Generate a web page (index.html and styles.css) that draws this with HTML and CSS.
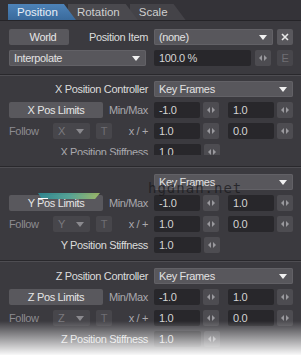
FILE: index.html
```html
<!DOCTYPE html>
<html lang="en">
  <head>
    <meta charset="UTF-8" />
    <title>Motion Options</title>
    <link rel="stylesheet" href="styles.css">
  </head>
  <body>
    <div class="tabs">
      <div class="tab active">Position</div>
      <div class="tab second">Rotation</div>
      <div class="tab third">Scale</div>
    </div>

    <div class="top">
      <div class="row">
        <div class="col">
          <div class="btn world">World</div>
          <span class="label">Position Item</span>
        </div>
        <div class="col">
          <div class="select">(none)</div>
          <div class="sq close">
            <svg width="8" height="8" viewBox="0 0 8 8"><path d="M1 1L7 7M7 1L1 7" stroke="#e8e8e8" stroke-width="1.6"/></svg>
          </div>
        </div>
      </div>
      <div class="row">
        <div class="col">
          <div class="select wide">Interpolate</div>
        </div>
        <div class="col">
          <div class="field grow">100.0 %</div>
          <div class="sq arrows"></div>
          <div class="sq dim e">E</div>
        </div>
      </div>
    </div>

    <div class="sep"></div>

    <div class="section x-section">
      <div class="clip">
        <div class="row">
          <div class="col"><span class="label">X Position Controller</span></div>
          <div class="col"><div class="select">Key Frames</div></div>
        </div>
        <div class="row">
          <div class="col">
            <div class="btn limits">X Pos Limits</div>
            <span class="label muted">Min/Max</span>
          </div>
          <div class="col">
            <div class="field">-1.0</div><div class="sq arrows"></div>
            <div class="field">1.0</div><div class="sq arrows"></div>
          </div>
        </div>
        <div class="row">
          <div class="col">
            <span class="follow">Follow</span>
            <div class="axis">X</div>
            <div class="sq dim t">T</div>
            <span class="label muted">x / +</span>
          </div>
          <div class="col">
            <div class="field">1.0</div><div class="sq arrows"></div>
            <div class="field">0.0</div><div class="sq arrows"></div>
          </div>
        </div>
        <div class="row">
          <div class="col"><span class="label muted">X Position Stiffness</span></div>
          <div class="col"><div class="field">1.0</div><div class="sq arrows"></div></div>
        </div>
      </div>
    </div>

    <div class="sep"></div>

    <div class="section">
      <div class="row">
        <div class="col"></div>
        <div class="col"><div class="select">Key Frames</div></div>
      </div>
      <div class="row">
        <div class="col">
          <div class="btn limits">Y Pos Limits</div>
          <span class="label muted">Min/Max</span>
        </div>
        <div class="col">
          <div class="field">-1.0</div><div class="sq arrows"></div>
          <div class="field">1.0</div><div class="sq arrows"></div>
        </div>
      </div>
      <div class="row">
        <div class="col">
          <span class="follow">Follow</span>
          <div class="axis">Y</div>
          <div class="sq dim t">T</div>
          <span class="label muted">x / +</span>
        </div>
        <div class="col">
          <div class="field">1.0</div><div class="sq arrows"></div>
          <div class="field">0.0</div><div class="sq arrows"></div>
        </div>
      </div>
      <div class="row">
        <div class="col"><span class="label">Y Position Stiffness</span></div>
        <div class="col"><div class="field">1.0</div><div class="sq arrows"></div></div>
      </div>
    </div>

    <div class="sep"></div>

    <div class="section">
      <div class="row">
        <div class="col"><span class="label">Z Position Controller</span></div>
        <div class="col"><div class="select">Key Frames</div></div>
      </div>
      <div class="row">
        <div class="col">
          <div class="btn limits">Z Pos Limits</div>
          <span class="label muted">Min/Max</span>
        </div>
        <div class="col">
          <div class="field">-1.0</div><div class="sq arrows"></div>
          <div class="field">1.0</div><div class="sq arrows"></div>
        </div>
      </div>
      <div class="row">
        <div class="col">
          <span class="follow">Follow</span>
          <div class="axis">Z</div>
          <div class="sq dim t">T</div>
          <span class="label muted">x / +</span>
        </div>
        <div class="col">
          <div class="field">1.0</div><div class="sq arrows"></div>
          <div class="field">0.0</div><div class="sq arrows"></div>
        </div>
      </div>
      <div class="row">
        <div class="col"><span class="label">Z Position Stiffness</span></div>
        <div class="col"><div class="field">1.0</div><div class="sq arrows"></div></div>
      </div>
    </div>

    <!-- overlays from the captured image -->
    <div class="streak"></div>
    <div class="streak-line"></div>
    <div class="watermark">hgdnan.net</div>
    <div class="fade"></div>
  </body>
</html>
```

FILE: styles.css
```css
body {
  margin: 0;
  width: 301px;
  height: 355px;
  overflow: hidden;
  position: relative;
  background-color: #3b3a3f;
  color: #d8d8d8;
  font-family: "Liberation Sans", Arial, sans-serif;
  font-size: 11px;
  letter-spacing: -0.35px;
}

/* tabs */
.tabs {
  height: 20px;
  display: flex;
  align-items: flex-end;
  padding-left: 8px;
  background-color: #343338;
  border-bottom: 1px solid #252428;
}
.tab {
  position: relative;
  height: 16px;
  line-height: 16px;
  padding: 0 18px 0 9px;
  margin-right: -8px;
  background-color: #4a494e;
  color: #cfcfcf;
  font-size: 11.5px;
  letter-spacing: 0;
  clip-path: polygon(0 0, calc(100% - 12px) 0, 100% 100%, 0 100%);
}
.tab.active {
  z-index: 3;
  color: #e8eef6;
  background: linear-gradient(#4d82b8, #3a6a9c);
}
.tab.second {
  z-index: 2;
}
.tab.third {
  z-index: 1;
  background-color: #444348;
}

/* rows */
.top {
  padding: 8px 0 8px;
  display: flex;
  flex-direction: column;
  gap: 5px;
}
.section {
  padding: 6px 0 7px;
  display: flex;
  flex-direction: column;
  gap: 5px;
}
.x-section {
  padding: 5px 0 11px;
}
.x-section .clip {
  height: 74px;
  overflow: hidden;
  display: flex;
  flex-direction: column;
  gap: 5px;
}
.row {
  display: grid;
  grid-template-columns: 139px 139px;
  column-gap: 6px;
  height: 16px;
  margin-left: 9px;
  flex-shrink: 0;
}
.col {
  display: flex;
  align-items: center;
  gap: 3px;
  height: 16px;
}
.sep {
  height: 1px;
  background-color: #29282c;
  border-bottom: 1px solid #4e4d52;
}

/* controls */
.label {
  flex: 1;
  text-align: right;
  white-space: nowrap;
  color: #dcdcdc;
}
.label.muted {
  color: #a9a8ad;
}
.follow {
  color: #8d8c91;
  width: 34px;
}
.btn {
  height: 16px;
  line-height: 16px;
  background-color: #59585d;
  border-radius: 2px;
  text-align: center;
  color: #e6e6e6;
}
.world {
  width: 60px;
  padding-left: 8px;
  box-sizing: border-box;
}
.limits {
  width: 94px;
}
.select {
  position: relative;
  flex: 1;
  height: 16px;
  line-height: 16px;
  padding-left: 5px;
  background-color: #58575c;
  border-radius: 2px;
  box-shadow: inset 0 0 0 1px #626166;
  color: #e2e2e2;
}
.select.wide {
  margin-right: 2px;
}
.select::after {
  content: "";
  position: absolute;
  right: 6px;
  top: 6px;
  border-left: 4px solid transparent;
  border-right: 4px solid transparent;
  border-top: 5px solid #f0f0f0;
}
.field {
  width: 42px;
  height: 16px;
  line-height: 16px;
  padding-left: 5px;
  background-color: #28272b;
  border-radius: 2px;
  color: #d4d4d4;
}
.field.grow {
  width: auto;
  flex: 1;
}
.sq {
  width: 16px;
  height: 16px;
  flex-shrink: 0;
  border-radius: 2px;
  background-color: #505055;
  display: flex;
  align-items: center;
  justify-content: center;
}
.col .field + .sq.arrows + .field {
  margin-left: 6px;
}
.arrows {
  background-color: #4d4c51;
  position: relative;
}
.arrows::before,
.arrows::after {
  content: "";
  position: absolute;
  top: 5px;
  border-top: 3px solid transparent;
  border-bottom: 3px solid transparent;
}
.arrows::before {
  left: 4px;
  border-right: 3px solid #9a999e;
}
.arrows::after {
  right: 4px;
  border-left: 3px solid #9a999e;
}
.top .arrows {
  margin-left: 1px;
}
.e {
  margin-left: 3px;
}
.dim {
  background-color: #47464b;
  color: #6f6e73;
}
.close {
  margin-left: 1px;
  background-color: #59585d;
}
.axis {
  position: relative;
  width: 37px;
  height: 16px;
  line-height: 16px;
  padding-left: 5px;
  box-sizing: border-box;
  background-color: #47464b;
  border-radius: 2px;
  color: #7a797e;
  margin-left: 7px;
}
.axis::after {
  content: "";
  position: absolute;
  right: 6px;
  top: 6px;
  border-left: 4px solid transparent;
  border-right: 4px solid transparent;
  border-top: 5px solid #8a898e;
}
.t {
  margin-left: 3px;
}

/* artifacts of the captured picture */
.streak {
  position: absolute;
  left: 38px;
  top: 193px;
  width: 62px;
  height: 6px;
  background: linear-gradient(to right, #2c8f9a, #55b0a0, #a9c86a);
  clip-path: polygon(0 0, 100% 0, 92% 100%, 6% 100%);
  opacity: 0.85;
}
.streak-line {
  position: absolute;
  left: 38px;
  top: 198px;
  width: 10px;
  height: 1px;
  background-color: #ffffff;
}
.watermark {
  position: absolute;
  left: 148px;
  top: 180px;
  font-family: "DejaVu Sans Mono", monospace;
  font-size: 14px;
  letter-spacing: 1px;
  color: rgba(25, 25, 28, 0.75);
}
.fade {
  position: absolute;
  left: 0;
  right: 0;
  bottom: 0;
  height: 34px;
  background: linear-gradient(rgba(255, 255, 255, 0), rgba(255, 255, 255, 0.97));
}
```
